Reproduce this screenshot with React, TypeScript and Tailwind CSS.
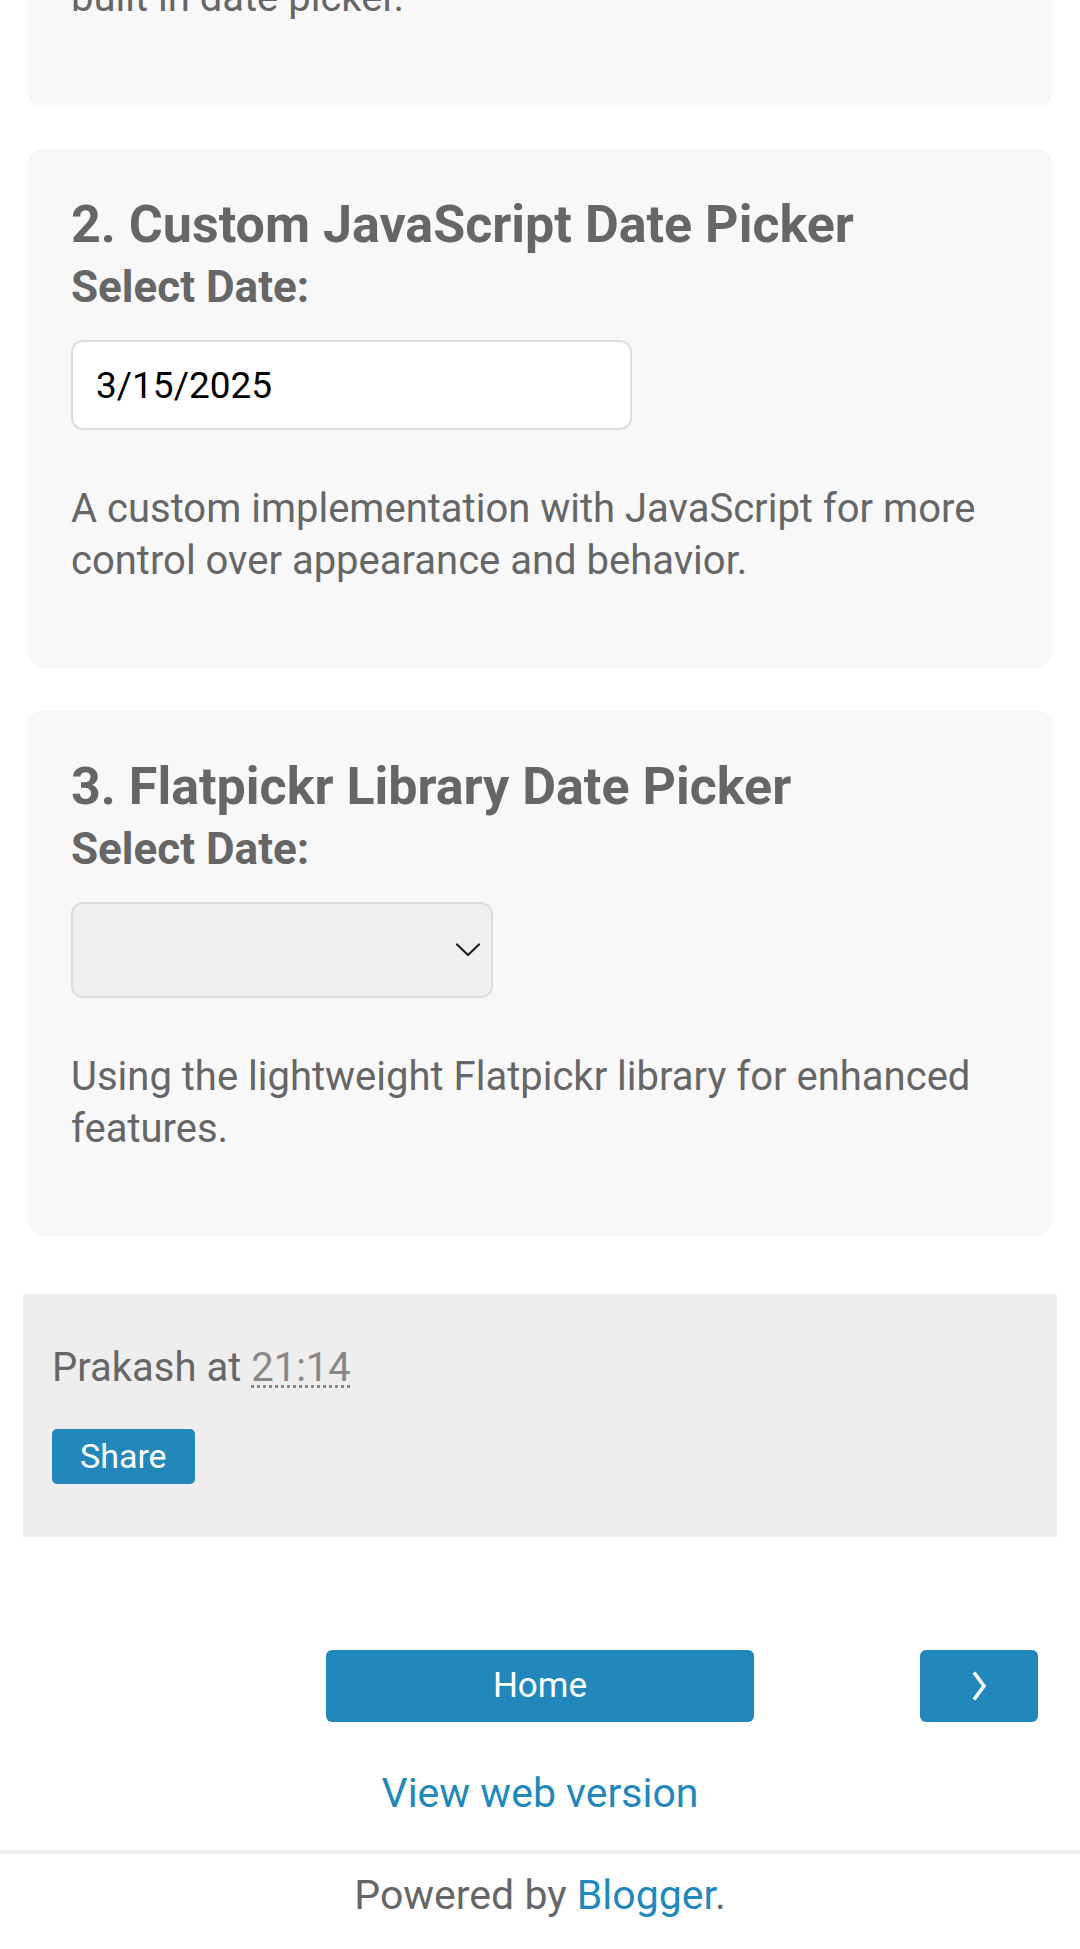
import React from "react";

interface Picker {
  title: string;
  kind: "input" | "select";
  value?: string;
  text: string;
}

const pickers: Picker[] = [
  {
    title: "2. Custom JavaScript Date Picker",
    kind: "input",
    value: "3/15/2025",
    text: "A custom implementation with JavaScript for more control over appearance and behavior.",
  },
  {
    title: "3. Flatpickr Library Date Picker",
    kind: "select",
    text: "Using the lightweight Flatpickr library for enhanced features.",
  },
];

function ChevronDown() {
  return (
    <svg width="24" height="14" viewBox="0 0 24 14" fill="none">
      <polyline
        points="1,1.5 12,12 23,1.5"
        stroke="#222222"
        strokeWidth="2.2"
        strokeLinecap="round"
        strokeLinejoin="round"
      />
    </svg>
  );
}

function PickerCard({ picker }: { picker: Picker }) {
  return (
    <div
      className="
        bg-[#f8f8f8]
        rounded-[14px]
        px-[43px]
        pt-[42px]
        pb-[81px]
      "
    >
      <h2 className="text-[52px] leading-[67px] font-bold text-[#666666]">
        {picker.title}
      </h2>

      <label className="block text-[44px] leading-[59px] font-bold text-[#666666]">
        Select Date:
      </label>

      {picker.kind === "input" ? (
        <input
          type="text"
          readOnly
          defaultValue={picker.value}
          className="
            mt-[23px]
            block
            w-[561px]
            h-[90px]
            px-[23px]
            bg-white
            border-2
            border-[#dddddd]
            rounded-[12px]
            text-[37px]
            text-black
            outline-none
            font-['Roboto',sans-serif]
          "
        />
      ) : (
        <div
          className="
            mt-[23px]
            flex
            items-center
            justify-end
            w-[422px]
            h-[96px]
            pr-[11px]
            bg-[#f0f0f0]
            border-2
            border-[#dddddd]
            rounded-[12px]
          "
        >
          <ChevronDown />
        </div>
      )}

      <p className="mt-[53px] text-[40px] leading-[52px] text-[#666666]">
        {picker.text}
      </p>
    </div>
  );
}

export default function App() {
  return (
    <div className="bg-white min-h-[1949px] overflow-hidden font-['Roboto',sans-serif]">
      <div className="px-[23px]">
        <div className="px-[5px] flex flex-col gap-[43px]">
          <div
            className="
              -mt-[60px]
              bg-[#f8f8f8]
              rounded-[14px]
              px-[43px]
              pt-[32px]
              pb-[82px]
            "
          >
            <p className="text-[40px] leading-[52px] text-[#666666]">
              built in date picker.
            </p>
          </div>

          {pickers.map((picker) => (
            <PickerCard key={picker.title} picker={picker} />
          ))}
        </div>

        <div
          className="
            mt-[58px]
            bg-[#eeeeee]
            pl-[29px]
            pt-[48px]
            pb-[53px]
          "
        >
          <div className="text-[40px] leading-[52px] text-[#666666]">
            Prakash at{" "}
            <span className="text-[#888888] underline decoration-dotted decoration-[3px] underline-offset-[4px]">
              21:14
            </span>
          </div>

          <button
            className="
              mt-[35px]
              h-[55px]
              px-[28px]
              rounded-[5px]
              bg-[#2288bb]
              text-white
              text-[34px]
              leading-[55px]
            "
          >
            Share
          </button>
        </div>
      </div>

      <div className="mt-[113px] px-[42px] grid grid-cols-[1fr_428px_1fr]">
        <div />
        <a className="h-[72px] rounded-[6px] bg-[#2288bb] flex items-center justify-center text-white text-[35px]">
          Home
        </a>
        <a className="justify-self-end w-[118px] h-[72px] rounded-[6px] bg-[#2288bb] flex items-center justify-center">
          <svg width="16" height="30" viewBox="0 0 16 30" fill="none">
            <polyline
              points="3,1.5 13,15 3,28.5"
              stroke="white"
              strokeWidth="3.6"
              strokeLinejoin="miter"
            />
          </svg>
        </a>
      </div>

      <div className="mt-[45px] text-center text-[41px] leading-[52px] text-[#2288bb]">
        View web version
      </div>

      <div className="mt-[31px] h-[4px] bg-[#efefef]" />

      <div className="mt-[15px] text-center text-[41px] leading-[52px] text-[#666666]">
        Powered by <span className="text-[#2288bb]">Blogger</span>.
      </div>
    </div>
  );
}
